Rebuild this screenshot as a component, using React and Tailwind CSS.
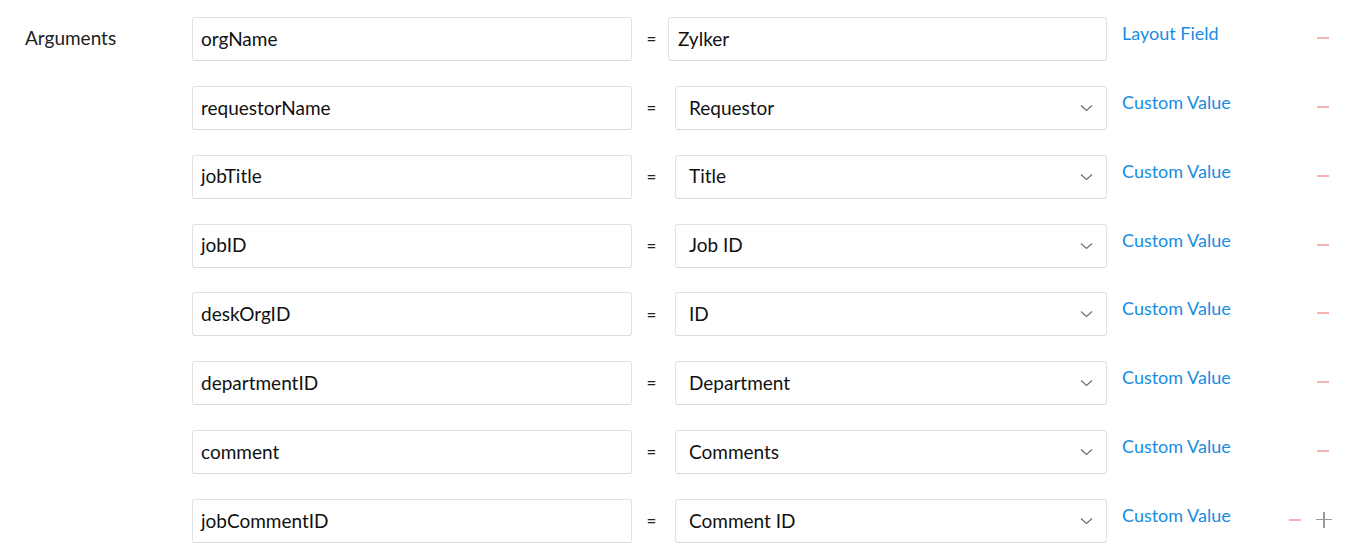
import React from "react";

const rows = [
  { name: "orgName", value: "Zylker", type: "text", link: "Layout Field" },
  { name: "requestorName", value: "Requestor", type: "select", link: "Custom Value" },
  { name: "jobTitle", value: "Title", type: "select", link: "Custom Value" },
  { name: "jobID", value: "Job ID", type: "select", link: "Custom Value" },
  { name: "deskOrgID", value: "ID", type: "select", link: "Custom Value" },
  { name: "departmentID", value: "Department", type: "select", link: "Custom Value" },
  { name: "comment", value: "Comments", type: "select", link: "Custom Value" },
  { name: "jobCommentID", value: "Comment ID", type: "select", link: "Custom Value", last: true },
];

function Chevron() {
  return (
    <svg width="13" height="8" viewBox="0 0 13 8" fill="none">
      <path d="M1 1.5 L6.5 6.5 L12 1.5" stroke="#6b6b6b" strokeWidth="1.1" />
    </svg>
  );
}

function Row({ row }) {
  return (
    <div className="flex items-start h-[44px]">
      <div className="w-[440px] h-[44px] border border-[#e2e2e2] border-b-[#d9d9d9] rounded-[3px] flex items-center pl-[8px] text-[19px] text-[#111]">
        {row.name}
      </div>
      <div className="w-[36px] h-[44px] flex items-center justify-center pl-[3px] text-[17px] text-[#222]">=</div>
      {row.type === "text" ? (
        <div className="w-[439px] h-[44px] border border-[#e2e2e2] border-b-[#d9d9d9] rounded-[3px] flex items-center pl-[9px] text-[19px] text-[#111]">
          {row.value}
        </div>
      ) : (
        <div className="ml-[7px] w-[432px] h-[44px] border border-[#e2e2e2] border-b-[#d9d9d9] rounded-[3px] flex items-center justify-between pl-[13px] pr-[13px] text-[19px] text-[#111]">
          <span>{row.value}</span>
          <Chevron />
        </div>
      )}
      <div className="ml-[15px] pt-[3px] text-[18px] text-[#188de2] w-[161px]">{row.link}</div>
      <div className="flex-1 flex items-center h-[44px] pb-[2px]">
        {row.last ? (
          <div className="flex items-center ml-[6px] gap-[15px]">
            <div className="w-[12px] h-[2px] bg-[#f7b3b3]" />
            <div className="relative w-[16px] h-[16px]">
              <div className="absolute left-0 top-[7px] w-[16px] h-[1.5px] bg-[#9a9a9a]" />
              <div className="absolute top-0 left-[7px] w-[1.5px] h-[16px] bg-[#9a9a9a]" />
            </div>
          </div>
        ) : (
          <div className="ml-[34px] w-[12px] h-[2px] bg-[#f7b3b3]" />
        )}
      </div>
    </div>
  );
}

export default function App() {
  return (
    <div className="w-[1361px] h-[554px] bg-white overflow-hidden font-['Lato',sans-serif]">
      <div className="flex pt-[17px] pl-[25px]">
        <div className="w-[167px] pt-[7px] text-[19px] text-[#222]">Arguments</div>
        <div className="flex flex-col gap-[24.85px]">
          {rows.map((r) => (
            <Row key={r.name} row={r} />
          ))}
        </div>
      </div>
    </div>
  );
}
